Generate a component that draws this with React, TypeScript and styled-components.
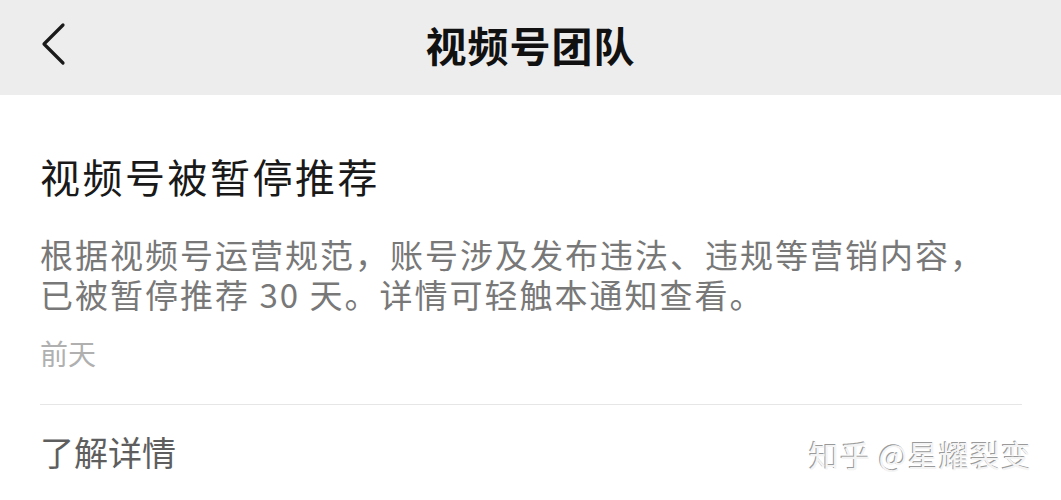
import styled, { createGlobalStyle } from "styled-components";

const GlobalStyle = createGlobalStyle`
  html, body {
    margin: 0;
    padding: 0;
    background: #ffffff;
  }
  body {
    font-family: "Noto Sans CJK SC", "Noto Sans", sans-serif;
  }
`;

const Page = styled.div`
  width: 1061px;
  height: 500px;
  overflow: hidden;
  background: #ffffff;
  display: flex;
  flex-direction: column;
`;

const NavBar = styled.header`
  flex-shrink: 0;
  height: 95px;
  background: #ededed;
  display: grid;
  grid-template-columns: 120px 1fr 120px;
  align-items: center;
  padding: 0 0 8px;
  box-sizing: border-box;
`;

const BackButton = styled.button`
  border: none;
  background: none;
  padding: 0 0 0 40px;
  display: flex;
  align-items: center;
  cursor: pointer;
`;

const NavTitle = styled.h1`
  margin: 0;
  text-align: center;
  font-size: 41px;
  font-weight: 700;
  color: #111111;
  letter-spacing: 1px;
`;

const Card = styled.main`
  flex-shrink: 0;
  padding: 0 39px 0 40px;
  display: flex;
  flex-direction: column;
`;

const Heading = styled.h2`
  margin: 53px 0 0;
  font-size: 40px;
  line-height: 56px;
  font-weight: 400;
  color: #191919;
  letter-spacing: 2.5px;
`;

const Body = styled.p`
  margin: 30px 0 0;
  font-size: 33px;
  line-height: 40px;
  color: #787878;
  letter-spacing: 2px;
`;

const Time = styled.span`
  margin-top: 19px;
  font-size: 28px;
  line-height: 40px;
  color: #b0b0b0;
`;

const Divider = styled.hr`
  margin: 31px 0 0;
  border: none;
  border-top: 1px solid #e6e6e6;
`;

const Footer = styled.div`
  display: flex;
  align-items: center;
  justify-content: space-between;
  height: 100px;
`;

const MoreLink = styled.span`
  font-size: 34px;
  color: #5e5e5e;
  margin-top: -8px;
`;

const Watermark = styled.span`
  font-size: 30px;
  color: #f4f4f4;
  text-shadow: -1px -1px 0 #9a9a9a, 1px 1px 0 #ffffff;
  margin-right: -10px;
  margin-top: -2px;
  letter-spacing: 1px;
`;

function Chevron() {
  return (
    <svg width="28" height="44" viewBox="0 0 28 44" fill="none">
      <path
        d="M23 3 L4 22 L23 41"
        stroke="#1a1a1a"
        strokeWidth="3.2"
        strokeLinecap="round"
        strokeLinejoin="round"
      />
    </svg>
  );
}

export default function App() {
  return (
    <>
      <GlobalStyle />
      <Page>
        <NavBar>
          <BackButton aria-label="返回">
            <Chevron />
          </BackButton>
          <NavTitle>视频号团队</NavTitle>
          <span />
        </NavBar>
        <Card>
          <Heading>视频号被暂停推荐</Heading>
          <Body>
            根据视频号运营规范，账号涉及发布违法、违规等营销内容，
            <br />
            已被暂停推荐 30 天。详情可轻触本通知查看。
          </Body>
          <Time>前天</Time>
          <Divider />
          <Footer>
            <MoreLink>了解详情</MoreLink>
            <Watermark>知乎 @星耀裂变</Watermark>
          </Footer>
        </Card>
      </Page>
    </>
  );
}
